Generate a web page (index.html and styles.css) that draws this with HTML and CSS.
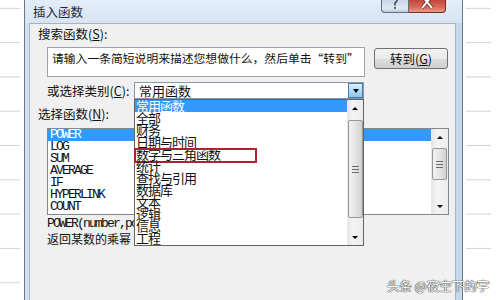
FILE: index.html
```html
<!DOCTYPE html>
<html lang="zh-CN">
<head>
<meta charset="UTF-8">
<title>插入函数</title>
<link rel="stylesheet" href="styles.css">
</head>
<body>
  <div class="screen">
    <div class="sheet sheet-left"></div>

    <div class="dialog">
      <div class="titlebar">
        <span class="title">插入函数</span>
        <div class="caption-buttons">
          <span class="cap-btn help">
            <svg width="8" height="10" viewBox="0 0 8 10"><path d="M1.5 -1.5 Q4 -3.5 6 -1 Q6.5 1.5 4 3 L4 5.5" fill="none" stroke="#3c4a5c" stroke-width="1.6"/><rect x="3.1" y="7" width="1.8" height="1.8" fill="#3c4a5c"/></svg>
          </span>
          <span class="cap-btn close">
            <svg width="14" height="10" viewBox="0 0 14 10"><path d="M2 -4 L12 8 M12 -4 L2 8" stroke="#5a1a14" stroke-width="3.4"/><path d="M2 -4 L12 8 M12 -4 L2 8" stroke="#fff" stroke-width="2"/></svg>
          </span>
        </div>
      </div>

      <div class="panel">
        <div class="label label-top">搜索函数(<u>S</u>):</div>
        <div class="search-row">
          <div class="search-box">请输入一条简短说明来描述您想做什么，然后单击“转到”</div>
          <button class="go-btn">转到(<u>G</u>)</button>
        </div>

        <div class="cat-row">
          <span class="cat-label">或选择类别(<u>C</u>):</span>
          <div class="select">
            <span class="select-value">常用函数</span>
            <span class="select-arrow"><i class="tri down"></i></span>

            <div class="dropdown">
              <ul class="options">
                <li class="selected">常用函数</li>
                <li>全部</li>
                <li>财务</li>
                <li>日期与时间</li>
                <li class="marked">数学与三角函数</li>
                <li>统计</li>
                <li>查找与引用</li>
                <li>数据库</li>
                <li>文本</li>
                <li>逻辑</li>
                <li>信息</li>
                <li>工程</li>
              </ul>
              <div class="scrollbar">
                <span class="sb-btn"><i class="tri up"></i></span>
                <div class="sb-track"><span class="sb-thumb thumb-long"></span></div>
                <span class="sb-btn"><i class="tri down"></i></span>
              </div>
            </div>
          </div>
        </div>

        <div class="label label-func">选择函数(<u>N</u>):</div>
        <div class="func-list">
          <ul class="funcs">
            <li class="selected">POWER</li>
            <li>LOG</li>
            <li>SUM</li>
            <li>AVERAGE</li>
            <li>IF</li>
            <li>HYPERLINK</li>
            <li>COUNT</li>
          </ul>
          <div class="scrollbar">
            <span class="sb-btn"><i class="tri up"></i></span>
            <div class="sb-track"><span class="sb-thumb thumb-short"></span></div>
            <span class="sb-btn"><i class="tri down"></i></span>
          </div>
        </div>

        <div class="signature">POWER(number,power)</div>
        <div class="desc">返回某数的乘幂</div>
      </div>
    </div>

    <div class="sheet sheet-right"></div>
  </div>

  <div class="watermark">头条 @夜空下的字</div>
</body>
</html>
```

FILE: styles.css
```css
  body {
    margin: 0;
    width: 500px;
    height: 300px;
    overflow: hidden;
    position: relative;
    background: #fff;
    font-family: "Noto Sans CJK SC", "Liberation Sans", sans-serif;
    font-size: 12px;
    color: #111;
  }

  ul {
    margin: 0;
    padding: 0;
    list-style: none;
  }

  u {
    text-decoration-thickness: 1px;
    text-underline-offset: 1px;
  }

  .screen {
    display: flex;
    height: 300px;
  }

  /* spreadsheet grid lines peeking out beside the dialog */
  .sheet {
    background-image: linear-gradient(to bottom, transparent 8px, #d2d2d2 8px, #d2d2d2 9px, transparent 9px);
    background-repeat: repeat-y;
    background-size: 20px 34.3px;
  }

  .sheet-left {
    width: 24px;
  }

  .sheet-right {
    flex: 1;
    background-position: 3px 0;
    background-size: 25px 34.3px;
  }

  .dialog {
    width: 439px;
    box-sizing: border-box;
    border-left: 1px solid #6b7889;
    border-right: 1px solid #6b7889;
    background: linear-gradient(to right, #d2e0ef, #dbe7f4 50%, #c6daef);
    display: flex;
    flex-direction: column;
  }

  .titlebar {
    height: 23px;
    display: flex;
    align-items: flex-start;
    padding-left: 8px;
    background: linear-gradient(to bottom, #e4edf8, #d7e4f3);
  }

  .title {
    margin-top: 4px;
    font-size: 12.5px;
    line-height: 16px;
    color: #1c2b40;
  }

  .caption-buttons {
    display: flex;
    margin-left: auto;
    margin-right: 16px;
  }

  .cap-btn {
    height: 13px;
    box-sizing: border-box;
    border: 1px solid #5d6d82;
    border-top: none;
    display: flex;
    align-items: flex-start;
    justify-content: center;
  }

  .help {
    width: 28px;
    border-radius: 0 0 0 4px;
    background: linear-gradient(to bottom, #c9d6e6, #e0e8f2 70%, #b9c9dc);
  }

  .close {
    width: 37px;
    border-left: none;
    border-color: #7b2a24;
    border-radius: 0 0 4px 0;
    background: linear-gradient(to bottom, #c2463c, #d86a58 60%, #e39c88);
  }

  .panel {
    flex: 1;
    margin: 0 6px 0 4px;
    border: 1px solid #a7b4c4;
    border-bottom: none;
    background: #f0f0f0;
    display: flex;
    flex-direction: column;
  }

  .label {
    margin-left: 8px;
    font-size: 12.5px;
    line-height: 16px;
  }

  .label-top {
    padding-top: 2px;
  }

  .search-row {
    display: flex;
    align-items: flex-start;
    margin: 5px 0 0 17px;
  }

  .search-box {
    width: 318px;
    height: 30px;
    box-sizing: border-box;
    border: 1px solid #9aa3ad;
    background: #fff;
    padding: 2px 0 0 4px;
    font-size: 11.8px;
    line-height: 16px;
    white-space: nowrap;
    overflow: hidden;
  }

  .go-btn {
    width: 74px;
    height: 21px;
    margin: 1px 0 0 9px;
    padding: 0;
    border: 1px solid #707070;
    border-radius: 3px;
    background: linear-gradient(to bottom, #f2f2f2, #ebebeb 50%, #dddddd 51%, #cfcfcf);
    font-family: inherit;
    font-size: 12.5px;
    line-height: 18px;
    color: #111;
  }

  .cat-row {
    display: flex;
    align-items: center;
    margin: 5px 0 0 17px;
    height: 17px;
  }

  .cat-label {
    width: 87px;
    font-size: 12.5px;
    line-height: 16px;
  }

  .select {
    position: relative;
    width: 230px;
    height: 17px;
    box-sizing: border-box;
    border: 1px solid #8c98a6;
    background: #fff;
    display: flex;
    z-index: 2;
  }

  .select-value {
    flex: 1;
    padding-left: 4px;
    font-size: 13px;
    line-height: 15px;
  }

  .select-arrow {
    width: 15px;
    box-sizing: border-box;
    border: 1px solid #3c7fb1;
    background: linear-gradient(to bottom, #d9eefb, #b4dcf6 50%, #8ec7ec);
    display: flex;
    align-items: center;
    justify-content: center;
  }

  .tri {
    width: 0;
    height: 0;
    border-left: 3.5px solid transparent;
    border-right: 3.5px solid transparent;
  }

  .tri.down {
    border-top: 4px solid #000;
  }

  .tri.up {
    border-bottom: 4px solid #000;
  }

  .dropdown {
    position: absolute;
    top: 16px;
    left: -1px;
    width: 230px;
    height: 147px;
    box-sizing: border-box;
    border: 1px solid #646464;
    background: #fff;
    display: flex;
  }

  .options {
    flex: 1;
  }

  .options li {
    position: relative;
    height: 12px;
    padding-left: 1px;
    font-size: 13px;
    letter-spacing: -1px;
    line-height: 12px;
    white-space: nowrap;
  }

  .options li.selected,
  .funcs li.selected {
    background: #3399ff;
    color: #fff;
  }

  .options li.marked::after {
    content: "";
    position: absolute;
    left: -1px;
    top: 0;
    width: 123px;
    height: 15px;
    box-sizing: border-box;
    border: 2px solid #b3212e;
  }

  .scrollbar {
    width: 16px;
    display: flex;
    flex-direction: column;
    background: linear-gradient(to right, #e6e6e6, #f4f4f4 40%, #ececec);
  }

  .sb-btn {
    height: 16px;
    display: flex;
    align-items: center;
    justify-content: center;
  }

  .sb-btn .tri {
    border-left-width: 3px;
    border-right-width: 3px;
    border-top-width: 3px;
    border-bottom-width: 3px;
  }

  .sb-track {
    flex: 1;
    display: flex;
    flex-direction: column;
    align-items: center;
  }

  .sb-thumb {
    width: 15px;
    box-sizing: border-box;
    border: 1px solid #979797;
    border-radius: 2px;
    background: linear-gradient(to right, #f3f3f3, #e4e4e4 50%, #d0d0d0);
    display: flex;
    align-items: center;
    justify-content: center;
  }

  .sb-thumb::after {
    content: "";
    width: 7px;
    height: 7px;
    background: repeating-linear-gradient(to bottom, #6b6b6b 0, #6b6b6b 1px, transparent 1px, transparent 3px);
  }

  .thumb-long {
    margin-top: 4px;
    height: 98px;
  }

  .thumb-short {
    margin-top: 3px;
    height: 32px;
  }

  .label-func {
    margin-top: 7px;
  }

  .func-list {
    margin: 6px 0 0 17px;
    width: 402px;
    height: 87px;
    box-sizing: border-box;
    border: 1px solid #828790;
    background: #fff;
    display: flex;
  }

  .funcs {
    flex: 1;
  }

  .funcs li,
  .signature {
    font-family: "Liberation Mono", monospace;
    font-size: 13px;
    letter-spacing: -1.8px;
    line-height: 12px;
    height: 12px;
  }

  .funcs li {
    padding-left: 2px;
  }

  .funcs + .scrollbar {
    width: 17px;
  }

  /* runs on under the open dropdown, as in the dialog */
  .signature {
    margin: 3px 0 0 17px;
    white-space: nowrap;
  }

  .desc {
    margin: 1px 0 0 17px;
    font-size: 12px;
    line-height: 15px;
  }

  .watermark {
    position: absolute;
    left: 387px;
    top: 279px;
    font-size: 12.5px;
    line-height: 14px;
    color: #fff;
    text-shadow: 0 0 1px #3c3c3c, 0 0 1px #3c3c3c, 0 0 1px #3c3c3c;
  }
```
